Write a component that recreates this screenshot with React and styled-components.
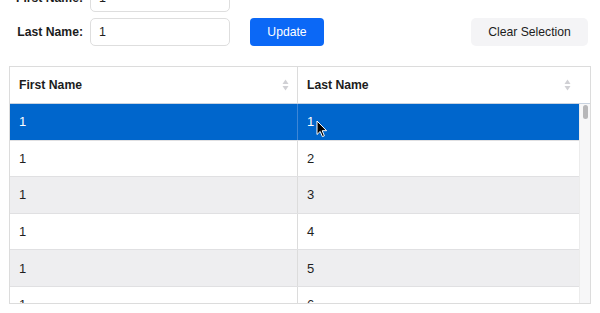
import React from "react";
import styled, { createGlobalStyle } from "styled-components";

const Global = createGlobalStyle`
  html, body { margin: 0; padding: 0; background: #ffffff; }
  body { font-family: "Liberation Sans", Arial, sans-serif; color: #1f1f1f; overflow: hidden; }
  * { box-sizing: border-box; }
`;

const Page = styled.div`
  width: 600px;
  height: 313px;
  padding: 0 12px 0 9px;
  overflow: hidden;
  position: relative;
`;

const Form = styled.div`
  margin-top: -16px;
  display: flex;
  flex-direction: column;
  gap: 6px;
`;

const FieldRow = styled.div`
  display: flex;
  align-items: center;
  height: 28px;
`;

const Label = styled.label`
  width: 81px;
  padding-right: 7px;
  text-align: right;
  font-size: 12.2px;
  font-weight: 700;
  color: #1c1c1c;
`;

const Input = styled.input`
  width: 140px;
  height: 28px;
  border: 1px solid #dedede;
  border-radius: 5px;
  padding: 0 8px;
  font-family: "Liberation Sans", Arial, sans-serif;
  font-size: 12.5px;
  color: #1f1f1f;
  background: #fff;
  outline: none;
`;

const Button = styled.button`
  height: 28px;
  border: none;
  padding: 0;
  width: ${(p) => p.$w}px;
  margin-left: ${(p) => p.$ml || 0}px;
  font-family: "Liberation Sans", Arial, sans-serif;
  font-size: 12.2px;
  background: ${(p) => (p.$primary ? "#0b68f6" : "#f4f4f6")};
  color: ${(p) => (p.$primary ? "#ffffff" : "#1c1c1c")};
  border-radius: ${(p) => (p.$primary ? 4 : 5)}px;
`;

const Spacer = styled.div`
  flex: 1;
`;

const Table = styled.div`
  margin-top: 20px;
  width: 582px;
  border: 1px solid #dcdcdc;
  height: 238px;
  display: flex;
  flex-direction: column;
  overflow: hidden;
`;

const HeaderRow = styled.div`
  display: grid;
  grid-template-columns: 288px 281px 11px;
  height: 37px;
  border-bottom: 1px solid #c9d3e0;
  background: #fff;
`;

const HeaderCell = styled.div`
  display: flex;
  align-items: center;
  justify-content: space-between;
  padding: 0 8px 0 9px;
  font-size: 12.2px;
  font-weight: 700;
  color: #1c1c1c;
  border-right: ${(p) => (p.$divider ? "1px solid #dcdcdc" : "none")};
`;

const Body = styled.div`
  flex: 1;
  display: flex;
  overflow: hidden;
`;

const Rows = styled.div`
  width: 569px;
  display: flex;
  flex-direction: column;
`;

const Row = styled.div`
  display: grid;
  grid-template-columns: 288px 281px;
  height: 36.6px;
  flex-shrink: 0;
  border-bottom: 1px solid #e0e0e2;
  background: ${(p) => (p.$selected ? "#0066cc" : p.$alt ? "#eeeef0" : "#ffffff")};
  color: ${(p) => (p.$selected ? "#ffffff" : "#1f1f1f")};
`;

const Cell = styled.div`
  display: flex;
  align-items: center;
  padding-left: 9px;
  font-size: 13px;
  border-right: ${(p) => (p.$divider ? `1px solid ${p.$sel ? "#3d86d6" : "#dcdcdc"}` : "none")};
`;

const Track = styled.div`
  width: 11px;
  background: #f7f7f8;
  border-left: 1px solid #ececec;
  position: relative;
`;

const Thumb = styled.div`
  position: absolute;
  left: 3px;
  top: 1px;
  width: 5px;
  height: 14px;
  border-radius: 3px;
  background: #b7b7b9;
`;

const CursorIcon = styled.svg`
  position: absolute;
  left: 316px;
  top: 120px;
`;

const SortIcon = () => (
  <svg width="7" height="12" viewBox="0 0 7 12">
    <path d="M3.5 0.5 L6.5 5 L0.5 5 Z" fill="#d0d0d4" />
    <path d="M3.5 11.5 L6.5 7 L0.5 7 Z" fill="#d0d0d4" />
  </svg>
);

const data = [1, 2, 3, 4, 5, 6];

export default function App() {
  return (
    <>
      <Global />
      <Page>
        <Form>
          <FieldRow>
            <Label>First Name:</Label>
            <Input defaultValue="1" />
          </FieldRow>
          <FieldRow>
            <Label>Last Name:</Label>
            <Input defaultValue="1" />
            <Button $primary $w={74} $ml={20}>Update</Button>
            <Spacer />
            <Button $w={117}>Clear Selection</Button>
          </FieldRow>
        </Form>
        <Table>
          <HeaderRow>
            <HeaderCell $divider>
              First Name
              <SortIcon />
            </HeaderCell>
            <HeaderCell>
              Last Name
              <SortIcon />
            </HeaderCell>
            <div />
          </HeaderRow>
          <Body>
            <Rows>
              {data.map((v, i) => (
                <Row key={v} $selected={i === 0} $alt={i % 2 === 0}>
                  <Cell $divider $sel={i === 0}>1</Cell>
                  <Cell>{v}</Cell>
                </Row>
              ))}
            </Rows>
            <Track>
              <Thumb />
            </Track>
          </Body>
        </Table>
        <CursorIcon width="12" height="18" viewBox="0 0 12 18">
          <path
            d="M1 1 L1 14.5 L4.2 11.4 L6.4 16.6 L8.4 15.8 L6.2 10.7 L10.6 10.7 Z"
            fill="#000"
            stroke="#fff"
            strokeWidth="1"
            strokeLinejoin="round"
          />
        </CursorIcon>
      </Page>
    </>
  );
}
